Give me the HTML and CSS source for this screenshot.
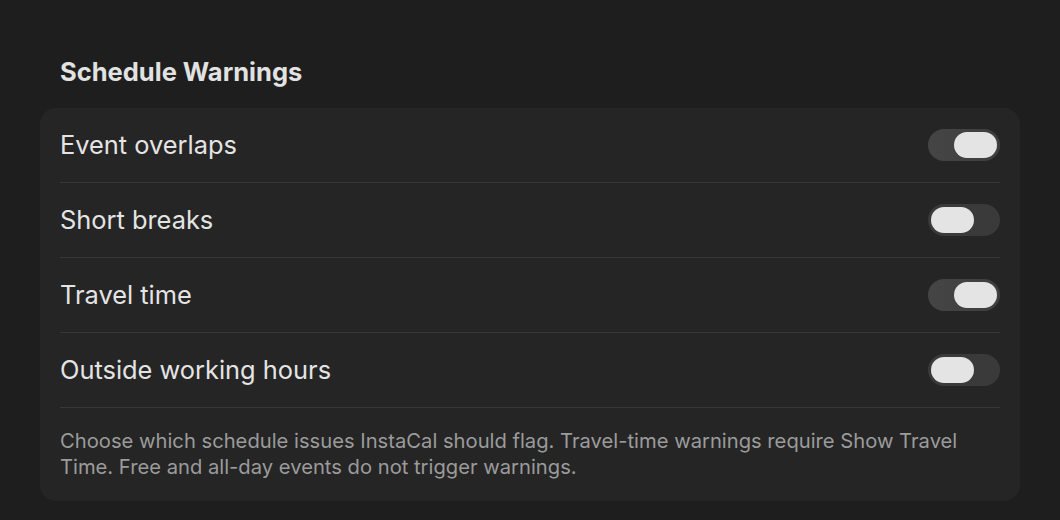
FILE: index.html
```html
<!DOCTYPE html>
<html lang="en">
<head>
<meta charset="utf-8">
<title>Schedule Warnings</title>
<link rel="stylesheet" href="styles.css">
</head>
<body>
<main class="page">
  <h2 class="section-title">Schedule Warnings</h2>
  <section class="card">
    <div class="row">
      <span class="label">Event overlaps</span>
      <span class="toggle on"><span class="knob"></span></span>
    </div>
    <div class="row">
      <span class="label">Short breaks</span>
      <span class="toggle"><span class="knob"></span></span>
    </div>
    <div class="row">
      <span class="label">Travel time</span>
      <span class="toggle on"><span class="knob"></span></span>
    </div>
    <div class="row">
      <span class="label">Outside working hours</span>
      <span class="toggle"><span class="knob"></span></span>
    </div>
    <p class="note">Choose which schedule issues InstaCal should flag. Travel-time warnings require Show Travel Time. Free and all-day events do not trigger warnings.</p>
  </section>
</main>
</body>
</html>
```

FILE: styles.css
```css
* { box-sizing: border-box; }
html, body {
  margin: 0;
  background: #1e1e1e;
  height: 100%;
}
body {
  font-family: Inter, "Noto Sans", "Liberation Sans", sans-serif;
  color: #e3e3e3;
}
.page {
  padding: 54px 40px 0 40px;
}
.section-title {
  margin: 0 0 18px 20px;
  font-size: 25.5px;
  line-height: 36px;
  font-weight: 700;
  color: #e2e2e2;
}
.card {
  background: #252525;
  border-radius: 16px;
  padding: 0 20px;
}
.row {
  display: flex;
  align-items: center;
  justify-content: space-between;
  height: 75px;
  border-bottom: 1px solid #373737;
}
.label {
  font-size: 25.4px;
  color: #e4e4e4;
  margin-bottom: 2px;
}
.toggle {
  display: flex;
  align-items: center;
  width: 72px;
  height: 32px;
  border-radius: 16px;
  background: #3a3a3a;
  padding: 3px;
}
.toggle.on {
  background: linear-gradient(90deg, #454545, #3e3e3e);
  justify-content: flex-end;
}
.toggle .knob {
  width: 43px;
  height: 26px;
  border-radius: 13px;
  background: #e4e4e4;
}
.note {
  margin: 0;
  padding: 20px 0 21px;
  font-size: 20.2px;
  line-height: 26px;
  color: #9b9b9b;
}
```
